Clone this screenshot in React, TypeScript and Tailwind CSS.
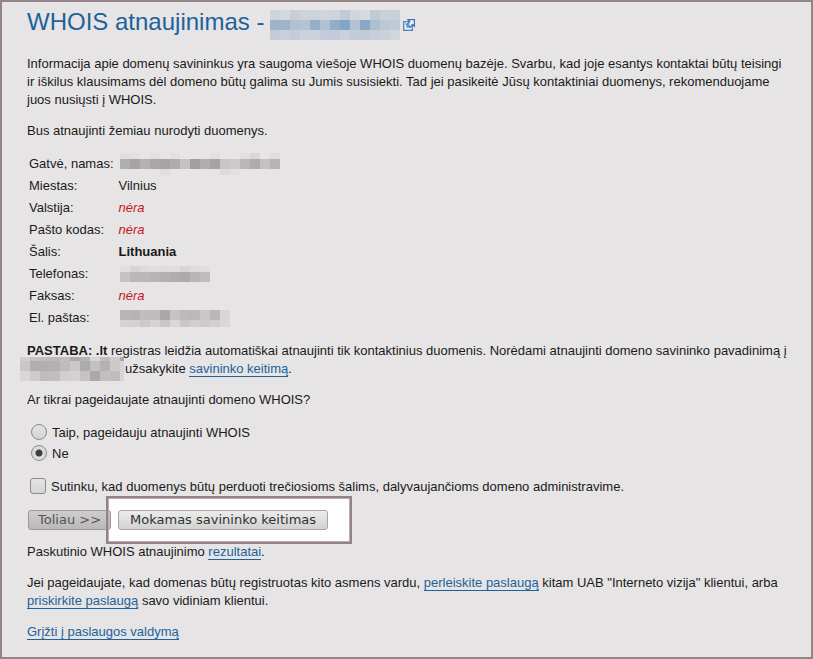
import { useState } from "react";

type Cell = string | null;

// Size of one block of a masked value
const CELL = 10;

const DOMAIN_MASK: Cell[][] = [
  ["#cdd4dc", "#d3d7df", "#c8cdd9", "#cdd2db", "#cdd3db", "#d0d5dc", "#d0d4da", "#bfcbd8", "#d1d5dd", "#d8dade", "#bfcbd7", "#c8d0d9", "#c8d0d9"],
  ["#9db4cb", "#9db4cb", "#b1c0d2", "#b4c3d4", "#95aeca", "#b0c1d3", "#93adc8", "#84a5c3", "#b2c2d3", "#8aa7c5", "#aebfd1", "#bac7d4", "#bfcad5"],
  ["#c3cdd8", "#c8cfda", "#c3cdd9", "#cbd2db", "#cbd2db", "#c5cbdb", "#c4cadb", "#cad1db", "#c1ccd8", "#c1ccd8", "#c5ced9", "#cad1da", "#d1d6dc"],
];

const STREET_MASK: Cell[][] = [
  ["#dfddde", "#e2e0e1", null, "#e1dfe0", null, "#e1dfe0", null, null, null, "#e1dfe0", null, null, "#e1dfe0", "#d9d7d8", null, "#dfddde"],
  ["#b0aeaf", "#a5a3a4", "#b3b1b2", "#a9a7a8", "#a5a3a4", "#aeacad", "#c4c2c3", "#a09e9f", "#afadae", "#a4a2a3", "#c9c5c6", "#cccacb", "#b9b7b8", "#adabac", "#c3c1c2", "#b7b3b4"],
  [null, null, null, null, "#dfddde", null, null, null, null, null, "#dcdadb", "#e2e0e1", null, null, null, null],
];

const PHONE_MASK: Cell[][] = [
  ["#e0dedf", "#d6d4d5", "#dcdadb", "#dfddde", "#dddbdc", "#dfddde", "#d7d5d6", "#dedcdd", "#dfddde"],
  ["#c4c2c3", "#b9b7b8", "#bab8b9", "#b5b3b4", "#b2b0b1", "#afadae", "#acaaab", "#b8b6b7", "#bebcbd"],
];

const EMAIL_MASK: Cell[][] = [
  ["#b9b5b6", "#b5b3b4", "#bfbdbe", "#bfbdbe", "#aaa8a9", "#c5c3c4", "#bcbabb", "#bab8b9", "#c9c7c8", "#b9b7b8", "#d8d6d7"],
  ["#d6d2d3", "#d3d1d2", "#cbc9ca", "#d5d3d4", "#c8c6c7", "#dad6d7", "#c8c6c7", "#d0ced0", "#cccacb", "#d1cfd0", "#d9d7d8"],
];

const OWNER_MASK: Cell[][] = [
  ["#d0ced0", "#c2c0c1", "#bebcbd", "#bcb8b9", "#bfbdbe", "#aaa8a9", "#b5b3b4", "#d8d4d5", "#bebcbd", "#cdcbcc", "#a9a7a8"],
  ["#c8c6c7", "#afadae", "#b1afb0", "#b2b0b1", "#bfbbbc", "#cac8c9", "#adabac", "#c2c0c1", "#b3b1b2", "#cbc9ca", "#d6d4d5"],
  ["#d8d6d7", "#cccacb", "#bebcbd", "#bfbdbe", "#d0ced0", "#d3d1d2", "#c4c2c3", "#aaa8a9", "#c1bfc0", "#bebcbd", "#d6d4d5"],
];

/**
 * Draws a masked value as a grid of coloured blocks
 * @param rows - Block colours, row by row
 * @param heights - Height of each row in pixels
 * @param width - Visible width, the last block may be cut
 */
function Mosaic({ rows, heights, width, className = "" }: { rows: Cell[][]; heights: number[]; width: number; className?: string }) {
  const height = heights.reduce((sum, h) => sum + h, 0);

  return (
    <svg width={width} height={height} viewBox={`0 0 ${width} ${height}`} shapeRendering="crispEdges" aria-hidden="true" className={className}>
      {rows.map((row, r) => {
        const y = heights.slice(0, r).reduce((sum, h) => sum + h, 0);
        return row.map((fill, c) => (fill ? <rect key={`${r}-${c}`} x={c * CELL} y={y} width={CELL} height={heights[r]} fill={fill} /> : null));
      })}
    </svg>
  );
}

function ExternalIcon() {
  return (
    <svg width="12" height="12" viewBox="0 0 12 12" fill="none">
      <path d="M.7 2.7h8.6v8.6H.7z" fill="#e9eff8" stroke="#5b7cc0" strokeWidth="1.3" />
      <path d="M5 .6h6.4v6.6L9.6 5.6 6.8 8.4 4 5.4l2.6-2.8z" fill="#e9eff8" stroke="#4568b5" strokeWidth="1.2" />
      <path d="M2.5 4.5l3.2 3.2M5.8 4.6v3.2H3" stroke="#3da4dc" strokeWidth="1.2" />
    </svg>
  );
}

function Link({ children }: { children: React.ReactNode }) {
  return (
    <a href="#" className="border-b border-[#1d629b] text-[#1d629b]">
      {children}
    </a>
  );
}

const Missing = () => <em className="text-[#c4161c]">nėra</em>;

const contacts = [
  { label: "Gatvė, namas:", value: <Mosaic rows={STREET_MASK} heights={[6, 10, 6]} width={160} className="ml-px block" /> },
  { label: "Miestas:", value: "Vilnius" },
  { label: "Valstija:", value: <Missing /> },
  { label: "Pašto kodas:", value: <Missing /> },
  { label: "Šalis:", value: <strong>Lithuania</strong> },
  { label: "Telefonas:", value: <Mosaic rows={PHONE_MASK} heights={[6, 10]} width={90} className="ml-px block" /> },
  { label: "Faksas:", value: <Missing /> },
  { label: "El. paštas:", value: <Mosaic rows={EMAIL_MASK} heights={[10, 7]} width={110} className="ml-px block" /> },
];

const radioClass =
  "-mt-[2px] size-4 shrink-0 appearance-none rounded-full border border-[#8c8a8b] bg-linear-to-b from-[#e4e3e3] to-[#d6d5d5] checked:bg-[radial-gradient(circle,#3c4043_3px,#dddcdc_4px)]";

const buttonClass = "h-5 rounded-[3px] border font-['DejaVu_Sans',sans-serif] text-[13px] leading-4 whitespace-nowrap";

function App() {
  const [confirm, setConfirm] = useState("no");
  const [agree, setAgree] = useState(false);

  return (
    <main className="min-h-screen border-2 border-[#948388] bg-[#e6e4e5] pr-6 pb-4 pl-[25px] font-['Liberation_Sans',Arial,sans-serif] text-[13px] leading-[18px] text-[#1a1a1a]">
      {/* Title with the masked domain name */}
      <h1 className="flex items-start pt-2 text-2xl leading-6 text-[#1d629b]">
        WHOIS atnaujinimas -
        <Mosaic rows={DOMAIN_MASK} heights={[10, 10, 10]} width={130} className="ml-[6px]" />
        <a href="#" aria-label="Atidaryti domeną" className="ml-[3px] self-center">
          <ExternalIcon />
        </a>
      </h1>

      <form className="mt-[15px] flex flex-col gap-[13px]" onSubmit={(e) => e.preventDefault()}>
        <p>
          Informacija apie domenų savininkus yra saugoma viešoje WHOIS duomenų bazėje. Svarbu, kad joje esantys kontaktai būtų teisingi ir iškilus klausimams dėl
          domeno būtų galima su Jumis susisiekti. Tad jei pasikeitė Jūsų kontaktiniai duomenys, rekomenduojame juos nusiųsti į WHOIS.
        </p>
        <p>Bus atnaujinti žemiau nurodyti duomenys.</p>

        {/* Current contact data */}
        <table className="self-start border-collapse">
          <tbody>
            {contacts.map(({ label, value }) => (
              <tr key={label} className="h-[22px]">
                <th scope="row" className="p-0 pr-[5px] pl-[2px] text-left font-normal">
                  {label}
                </th>
                <td className="p-0">{value}</td>
              </tr>
            ))}
          </tbody>
        </table>

        <p className="-mr-5">
          <strong>PASTABA: .lt</strong> registras leidžia automatiškai atnaujinti tik kontaktinius duomenis. Norėdami atnaujinti domeno savininko pavadinimą į{" "}
          <Mosaic rows={OWNER_MASK} heights={[4, 10, 10]} width={104} className="-my-[3px] mr-px -ml-[7px] inline-block align-top" />
          užsakykite <Link>savininko keitimą</Link>.
        </p>
        <p>Ar tikrai pageidaujate atnaujinti domeno WHOIS?</p>

        {/* Confirmation */}
        <div className="flex flex-col gap-[3px] pt-[2px] pl-1">
          <label className="flex items-center gap-[5px]">
            <input type="radio" name="confirm" checked={confirm === "yes"} onChange={() => setConfirm("yes")} className={radioClass} />
            Taip, pageidauju atnaujinti WHOIS
          </label>
          <label className="flex items-center gap-[5px]">
            <input type="radio" name="confirm" checked={confirm === "no"} onChange={() => setConfirm("no")} className={radioClass} />
            Ne
          </label>
        </div>
        <label className="flex items-center gap-[5px] pt-[2px] pl-[3px]">
          <input
            type="checkbox"
            checked={agree}
            onChange={(e) => setAgree(e.target.checked)}
            className="-mt-[2px] size-4 shrink-0 appearance-none rounded-[3px] border border-[#8c8a8b] bg-linear-to-b from-[#e4e3e3] to-[#d6d5d5] checked:bg-[#3c4043]"
          />
          Sutinku, kad duomenys būtų perduoti trečiosioms šalims, dalyvaujančioms domeno administravime.
        </label>

        {/* The frame around the paid option runs over the end of the first button */}
        <div className="-mt-[13px] -mb-[14px] flex items-center pl-px">
          <button type="submit" className={`${buttonClass} relative z-10 border-[#9a9899] bg-linear-to-b from-[#cfcdce] to-[#bab8b9] px-[9px] text-[#555]`}>
            Toliau &gt;&gt;
          </button>
          <div className="relative -ml-[5px] bg-white py-[14px] pr-6 pl-3">
            <span className="pointer-events-none absolute inset-0 z-20 border-2 border-[#948388] shadow-[inset_0_0_0_1px_#b9adb1]" />
            <button type="button" className={`${buttonClass} block border-[#a5a5a3] bg-linear-to-b from-[#ececeb] to-[#d2d2d0] px-[11px] text-[#2e3436]`}>
              Mokamas savininko keitimas
            </button>
          </div>
        </div>

        <p>
          Paskutinio WHOIS atnaujinimo <Link>rezultatai</Link>.
        </p>
        <p>
          Jei pageidaujate, kad domenas būtų registruotas kito asmens vardu, <Link>perleiskite paslaugą</Link> kitam UAB "Interneto vizija" klientui, arba{" "}
          <Link>priskirkite paslaugą</Link> savo vidiniam klientui.
        </p>
        <p>
          <Link>Grįžti į paslaugos valdymą</Link>
        </p>
      </form>
    </main>
  );
}

export default App;
